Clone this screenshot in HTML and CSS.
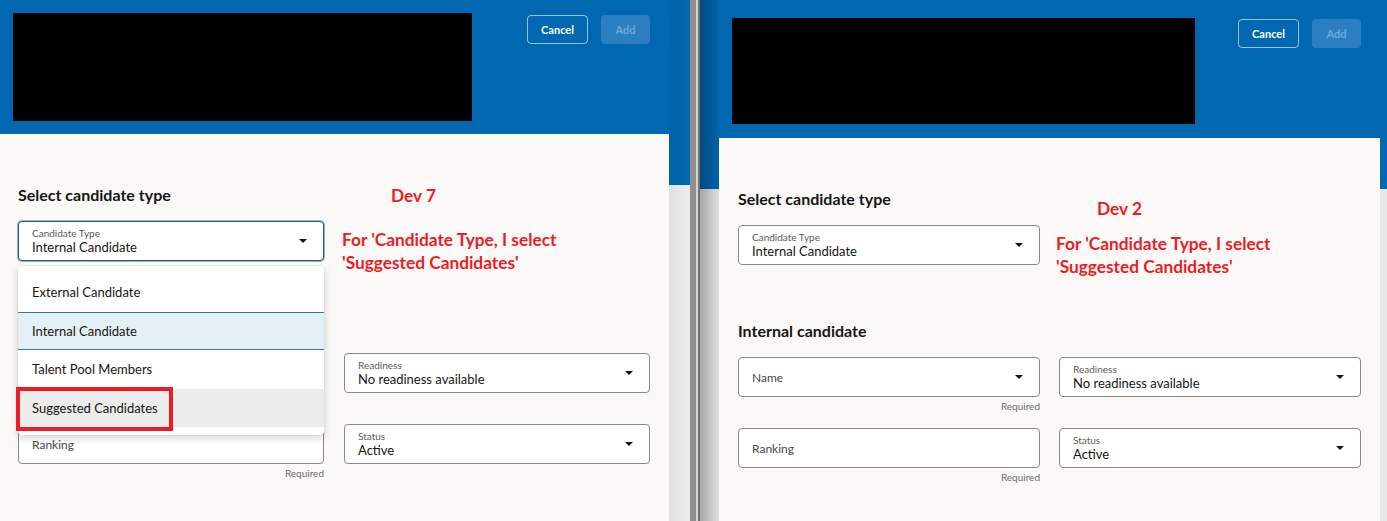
FILE: index.html
```html
<!DOCTYPE html>
<html>
<head>
<meta charset="utf-8">
<link rel="stylesheet" href="styles.css">
</head>
<body>
<div class="win win-left">
  <div class="hdr">
    <div class="redact"></div>
    <div class="actions">
      <button class="btn btn-cancel">Cancel</button>
      <button class="btn btn-add">Add</button>
    </div>
  </div>
  <div class="card">
    <h2 class="title">Select candidate type</h2>
    <div class="type-wrap">
      <div class="field field-focus">
        <div class="fcol"><span class="flabel">Candidate Type</span><span class="fvalue">Internal Candidate</span></div>
        <svg class="caret" viewBox="0 0 8 4" width="8" height="4"><polygon points="0,0 8,0 4,4"/></svg>
      </div>
      <ul class="menu">
        <li class="opt">External Candidate</li>
        <li class="opt opt-sel">Internal Candidate</li>
        <li class="opt">Talent Pool Members</li>
        <li class="opt opt-hover">Suggested Candidates</li>
      </ul>
    </div>
    <h2 class="title title-sub covered">Internal candidate</h2>
    <div class="grid">
      <div class="cell covered">
        <div class="field"><span class="fplace">Name</span><svg class="caret" viewBox="0 0 8 4" width="8" height="4"><polygon points="0,0 8,0 4,4"/></svg></div>
        <div class="helper">Required</div>
      </div>
      <div class="cell">
        <div class="field">
          <div class="fcol"><span class="flabel">Readiness</span><span class="fvalue">No readiness available</span></div>
          <svg class="caret" viewBox="0 0 8 4" width="8" height="4"><polygon points="0,0 8,0 4,4"/></svg>
        </div>
        <div class="helper"></div>
      </div>
      <div class="cell">
        <div class="field"><span class="fplace">Ranking</span></div>
        <div class="helper">Required</div>
      </div>
      <div class="cell">
        <div class="field">
          <div class="fcol"><span class="flabel">Status</span><span class="fvalue">Active</span></div>
          <svg class="caret" viewBox="0 0 8 4" width="8" height="4"><polygon points="0,0 8,0 4,4"/></svg>
        </div>
        <div class="helper"></div>
      </div>
    </div>
    <div class="note note-dev">Dev 7</div>
    <div class="note note-msg">For 'Candidate Type, I select<br>'Suggested Candidates'</div>
    <div class="redbox"></div>
  </div>
</div>
<div class="divider"></div>
<div class="win win-right">
  <div class="hdr">
    <div class="redact"></div>
    <div class="actions">
      <button class="btn btn-cancel">Cancel</button>
      <button class="btn btn-add">Add</button>
    </div>
  </div>
  <div class="card">
    <h2 class="title">Select candidate type</h2>
    <div class="type-wrap">
      <div class="field">
        <div class="fcol"><span class="flabel">Candidate Type</span><span class="fvalue">Internal Candidate</span></div>
        <svg class="caret" viewBox="0 0 8 4" width="8" height="4"><polygon points="0,0 8,0 4,4"/></svg>
      </div>
    </div>
    <h2 class="title title-sub">Internal candidate</h2>
    <div class="grid">
      <div class="cell">
        <div class="field"><span class="fplace">Name</span><svg class="caret" viewBox="0 0 8 4" width="8" height="4"><polygon points="0,0 8,0 4,4"/></svg></div>
        <div class="helper">Required</div>
      </div>
      <div class="cell">
        <div class="field">
          <div class="fcol"><span class="flabel">Readiness</span><span class="fvalue">No readiness available</span></div>
          <svg class="caret" viewBox="0 0 8 4" width="8" height="4"><polygon points="0,0 8,0 4,4"/></svg>
        </div>
        <div class="helper"></div>
      </div>
      <div class="cell">
        <div class="field"><span class="fplace">Ranking</span></div>
        <div class="helper">Required</div>
      </div>
      <div class="cell">
        <div class="field">
          <div class="fcol"><span class="flabel">Status</span><span class="fvalue">Active</span></div>
          <svg class="caret" viewBox="0 0 8 4" width="8" height="4"><polygon points="0,0 8,0 4,4"/></svg>
        </div>
        <div class="helper"></div>
      </div>
    </div>
    <div class="note note-dev">Dev 2</div>
    <div class="note note-msg">For 'Candidate Type, I select<br>'Suggested Candidates'</div>
  </div>
</div>
</body>
</html>
```
FILE: styles.css
```css
* { box-sizing: border-box; }
html, body { margin: 0; padding: 0; }
body {
  width: 1387px;
  height: 521px;
  overflow: hidden;
  display: flex;
  font-family: Lato, "Noto Sans", sans-serif;
  color: #161513;
}

.win {
  display: flex;
  flex-direction: column;
  height: 521px;
}
.win-left {
  width: 690px;
  padding-right: 21px;
  background: linear-gradient(to right, rgba(0,0,0,0) 669px, rgba(0,0,0,0.05) 669px, rgba(0,0,0,0) 690px),
              linear-gradient(to bottom, #0067b1 185px, #ececec 185px);
}
.divider {
  width: 10px;
  height: 521px;
  background: linear-gradient(to right, #8f8f8f 0 6px, #d4d4d4 6px 8px, #737373 8px 10px);
}
.win-right {
  flex: 1;
  padding-left: 19px;
  padding-right: 7px;
  background: linear-gradient(to right, rgba(0,0,0,0.28), rgba(0,0,0,0.04) 19px, rgba(0,0,0,0) 19px),
              linear-gradient(to bottom, #0067b1 189px, #e8e8e8 189px);
}

.hdr {
  display: flex;
  justify-content: space-between;
  align-items: flex-start;
}
.win-left .hdr { height: 134px; padding: 13px 19px 0 13px; }
.win-right .hdr { height: 138px; padding: 18px 19px 0 13px; }

.redact { background: #000; }
.win-left .redact { width: 459px; height: 108px; }
.win-right .redact { width: 463px; height: 106px; }

.actions { display: flex; gap: 13px; }
.win-left .actions { margin-top: 2px; }
.win-right .actions { margin-top: 1px; }

.btn {
  height: 29px;
  border-radius: 4px;
  font-family: Lato, "Noto Sans", sans-serif;
  font-size: 11px;
  font-weight: 700;
  padding: 0;
}
.btn-cancel {
  width: 61px;
  background: transparent;
  border: 1px solid rgba(255,255,255,0.6);
  color: #fff;
}
.btn-add {
  width: 49px;
  background: #2b7fc0;
  border: none;
  color: #6ba8da;
}

.card {
  position: relative;
  flex: 1;
  background: #faf9f8;
  padding-top: 51px;
}
.win-left .card { padding-left: 18px; padding-right: 19px; }
.win-right .card { padding-left: 19px; padding-right: 19px; }

.title {
  margin: 0;
  font-size: 16px;
  line-height: 20px;
  font-weight: 700;
  color: #161513;
}
.type-wrap { position: relative; margin-top: 16px; }
.win-left .type-wrap { width: 306px; }
.win-right .type-wrap { width: 302px; }

.title-sub { margin-top: 56px; }
.covered { visibility: hidden; }

.field {
  height: 40px;
  background: #fff;
  border: 1px solid #8a8988;
  border-radius: 4px;
  display: flex;
  align-items: center;
  justify-content: space-between;
  padding: 0 16px 0 13px;
}
.field-focus {
  border-color: #1f5c7e;
  box-shadow: 0 0 0 1px rgba(31,92,126,0.45);
}
.fcol {
  display: flex;
  flex-direction: column;
  align-self: flex-start;
  padding-top: 5px;
}
.flabel {
  font-size: 10px;
  line-height: 12px;
  color: #5b5a58;
}
.fvalue {
  font-size: 13px;
  line-height: 16px;
  color: #161513;
}
.fplace {
  font-size: 12px;
  color: #4a4846;
}
.caret { fill: #161513; flex: none; }

.menu {
  position: absolute;
  left: 0;
  right: 0;
  top: 45px;
  margin: 0;
  padding: 7px 0 8px;
  list-style: none;
  background: #fff;
  border-radius: 4px;
  box-shadow: 0 3px 8px rgba(0,0,0,0.18), 0 0 1px rgba(0,0,0,0.2);
  z-index: 2;
}
.opt {
  height: 38.5px;
  display: flex;
  align-items: center;
  padding-left: 14px;
  font-size: 13px;
  color: #161513;
}
.opt-sel {
  background: #e4f0f6;
  border-top: 1px solid #2c7ba6;
  border-bottom: 1px solid #2c7ba6;
}
.opt-hover { background: #ececec; }

.grid {
  display: grid;
  row-gap: 13px;
  margin-top: 16px;
}
.win-left .grid { grid-template-columns: 306px 306px; column-gap: 20px; }
.win-right .grid { grid-template-columns: 302px 302px; column-gap: 19px; }

.helper {
  height: 18px;
  line-height: 18px;
  font-size: 10px;
  text-align: right;
  color: #6b6a68;
}

.note {
  position: absolute;
  font-family: Lato, "Liberation Sans", sans-serif;
  font-weight: 700;
  font-size: 17.3px;
  line-height: 23px;
  color: #ed1c24;
  white-space: nowrap;
  z-index: 3;
}
.win-left .note-dev { left: 391px; top: 50px; }
.win-left .note-msg { left: 342px; top: 94px; }
.win-right .note-dev { left: 378px; top: 59px; }
.win-right .note-msg { left: 337px; top: 94px; }

.redbox {
  position: absolute;
  left: 16px;
  top: 253px;
  width: 157px;
  height: 44px;
  border: 4px solid #ed1c24;
  z-index: 4;
}
```
